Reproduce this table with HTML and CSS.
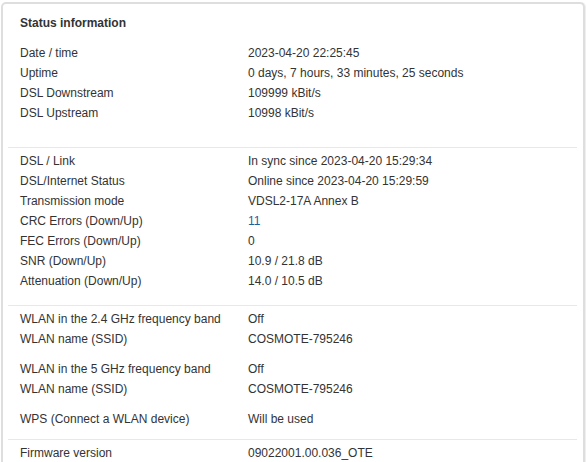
FILE: index.html
```html
<!DOCTYPE html>
<html lang="en">
<head>
<meta charset="utf-8">
<title>Status information</title>
<link rel="stylesheet" href="styles.css">
</head>
<body>
<div class="card">
  <div class="title">Status information</div>
  <div class="section s1">
    <div class="row"><span>Date / time</span><span>2023-04-20 22:25:45</span></div>
    <div class="row"><span>Uptime</span><span>0 days, 7 hours, 33 minutes, 25 seconds</span></div>
    <div class="row"><span>DSL Downstream</span><span>109999 kBit/s</span></div>
    <div class="row"><span>DSL Upstream</span><span>10998 kBit/s</span></div>
  </div>
  <div class="divider"></div>
  <div class="section s2">
    <div class="row"><span>DSL / Link</span><span>In sync since 2023-04-20 15:29:34</span></div>
    <div class="row"><span>DSL/Internet Status</span><span>Online since 2023-04-20 15:29:59</span></div>
    <div class="row"><span>Transmission mode</span><span>VDSL2-17A Annex B</span></div>
    <div class="row"><span>CRC Errors (Down/Up)</span><a class="link" href="#">11</a></div>
    <div class="row"><span>FEC Errors (Down/Up)</span><span>0</span></div>
    <div class="row"><span>SNR (Down/Up)</span><span>10.9 / 21.8 dB</span></div>
    <div class="row"><span>Attenuation (Down/Up)</span><span>14.0 / 10.5 dB</span></div>
  </div>
  <div class="divider"></div>
  <div class="section s3">
    <div class="group">
      <div class="row"><span>WLAN in the 2.4 GHz frequency band</span><span>Off</span></div>
      <div class="row"><span>WLAN name (SSID)</span><span>COSMOTE-795246</span></div>
    </div>
    <div class="group">
      <div class="row"><span>WLAN in the 5 GHz frequency band</span><span>Off</span></div>
      <div class="row"><span>WLAN name (SSID)</span><span>COSMOTE-795246</span></div>
    </div>
    <div class="group">
      <div class="row"><span>WPS (Connect a WLAN device)</span><span>Will be used</span></div>
    </div>
  </div>
  <div class="divider"></div>
  <div class="section s4">
    <div class="row"><span>Firmware version</span><span>09022001.00.036_OTE</span></div>
  </div>
</div>
</body>
</html>
```

FILE: styles.css
```css
html, body {
  margin: 0;
  padding: 0;
  background: #ffffff;
}

body {
  font-family: "Liberation Sans", Arial, sans-serif;
  font-size: 12px;
  color: #333333;
  overflow: hidden;
}

.card {
  margin: 2px 2px 0 1px;
  border: 2px solid #dedede;
  border-bottom: none;
  border-radius: 5px 5px 0 0;
  box-shadow: 1px 0 0 #efefef;
  padding: 9px 6px 20px 5px;
  height: 480px;
  box-sizing: border-box;
}

.title {
  font-weight: bold;
  line-height: 20px;
  padding-left: 12px;
  margin-bottom: 10px;
}

.section {
  padding: 0 12px;
}

.row {
  display: grid;
  grid-template-columns: 228px 1fr;
  line-height: 20px;
  height: 20px;
  white-space: nowrap;
}

.link {
  color: #1a5f9e;
  text-decoration: none;
}

.divider {
  border-top: 1px solid #e8e8e8;
}

.s1 {
  margin-bottom: 24px;
}

.s2 {
  margin-top: 3px;
  margin-bottom: 14px;
}

.s3 {
  margin-top: 3px;
  margin-bottom: 10px;
  display: flex;
  flex-direction: column;
  gap: 10px;
}

.s4 {
  margin-top: 3px;
}
```
